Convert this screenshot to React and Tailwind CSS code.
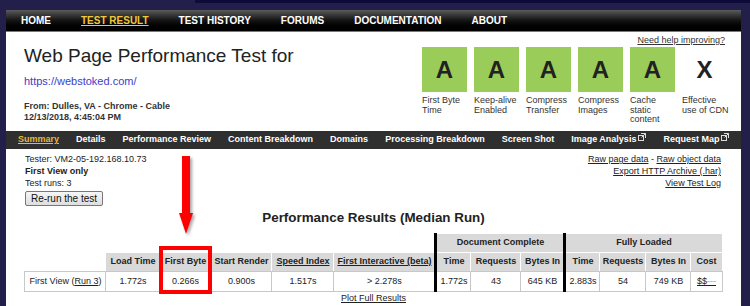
import React from 'react'

const navItems = ['HOME', 'TEST RESULT', 'TEST HISTORY', 'FORUMS', 'DOCUMENTATION', 'ABOUT']

const subNav = [
  { label: 'Summary', active: true },
  { label: 'Details' },
  { label: 'Performance Review' },
  { label: 'Content Breakdown' },
  { label: 'Domains' },
  { label: 'Processing Breakdown' },
  { label: 'Screen Shot' },
  { label: 'Image Analysis', ext: true },
  { label: 'Request Map', ext: true },
]

const grades = [
  { grade: 'A', lines: ['First Byte', 'Time'] },
  { grade: 'A', lines: ['Keep-alive', 'Enabled'] },
  { grade: 'A', lines: ['Compress', 'Transfer'] },
  { grade: 'A', lines: ['Compress', 'Images'] },
  { grade: 'A', lines: ['Cache', 'static', 'content'] },
  { grade: 'X', lines: ['Effective', 'use of CDN'] },
]

// little "opens in new window" glyph
const ExtIcon = () => (
  <svg width="8" height="8" viewBox="0 0 8 8" className="ml-[2px] inline-block align-[1px]" fill="none" stroke="#ddd" strokeWidth="1">
    <rect x="0.5" y="2.5" width="5" height="5" />
    <path d="M3 0.5h4.5v4.5" />
    <path d="M7.5 0.5L3.5 4.5" />
  </svg>
)

const App = () => {
  return (
    <div className="relative w-[750px] h-[306px] overflow-hidden bg-[#221f4b] font-['Liberation_Sans',Arial,sans-serif]">
      {/* top strip */}
      <div className="h-[10px] flex">
        <div className="w-[195px]" />
        <div className="flex-1 h-[3px] bg-[#0e0b3b]" />
      </div>

      <div className="ml-[6px] mr-[9px] bg-white h-[296px]">
        {/* main nav */}
        <div className="h-[22px] flex items-center gap-[30px] pl-[15px] bg-gradient-to-b from-[#5c5c5c] via-[#141414] to-black border-b border-[#7a7a7a] text-[10px] font-bold">
          {navItems.map((item) => (
            <span
              key={item}
              className={item === 'TEST RESULT' ? 'text-[#f3c73b] underline' : 'text-white'}
            >
              {item}
            </span>
          ))}
        </div>

        {/* header */}
        <div className="h-[99px] flex justify-between">
          <div className="pl-[18px] pt-[13px] text-[#222]">
            <h1 className="text-[19px] leading-[22px]">Web Page Performance Test for</h1>
            <p className="mt-[8px] text-[11px] leading-[13px] text-[#3d3dc8]">https://webstoked.com/</p>
            <div className="mt-[13px] text-[9px] leading-[11px] font-bold text-[#333]">
              <p>From: Dulles, VA - Chrome - Cable</p>
              <p>12/13/2018, 4:45:04 PM</p>
            </div>
          </div>

          <div className="pr-[14px] pt-[3px] flex flex-col items-end">
            <span className="mr-[2px] text-[9px] leading-[11px] text-[#333] underline">Need help improving?</span>
            <div className="mt-[1px] flex gap-[7px]">
              {grades.map((g, i) => (
                <div key={i} className="w-[45px]">
                  <div
                    className={`h-[45px] flex items-center justify-center text-[24px] font-bold text-[#222] ${
                      g.grade === 'A' ? 'bg-[#9acc5a]' : ''
                    }`}
                  >
                    {g.grade}
                  </div>
                  <div className="mt-[4px] text-[9px] leading-[9.5px] text-[#333] whitespace-nowrap">
                    {g.lines.map((l) => (
                      <div key={l}>{l}</div>
                    ))}
                  </div>
                </div>
              ))}
            </div>
          </div>
        </div>

        {/* sub nav */}
        <div className="h-[18px] flex items-center gap-[17px] pl-[12px] bg-[#2f2f2f] text-[9px] font-bold">
          {subNav.map((s) => (
            <span
              key={s.label}
              className={`whitespace-nowrap ${s.active ? 'text-[#e8b83a] underline' : 'text-white'}`}
            >
              {s.label}
              {s.ext && <ExtIcon />}
            </span>
          ))}
        </div>

        {/* summary */}
        <div className="pt-[4px] flex justify-between text-[9px] leading-[12px] text-[#222]">
          <div className="pl-[19px]">
            <p>Tester: VM2-05-192.168.10.73</p>
            <p className="font-bold">First View only</p>
            <p>Test runs: 3</p>
            <button className="mt-[2px] h-[15px] w-[78px] flex items-center justify-center border border-[#777] rounded-[2px] bg-gradient-to-b from-[#f6f6f6] to-[#dedede] text-[10px] text-[#111]">
              Re-run the test
            </button>
          </div>
          <div className="pr-[20px] flex flex-col items-end text-[#222]">
            <p>
              <span className="underline">Raw page data</span> - <span className="underline">Raw object data</span>
            </p>
            <p className="underline">Export HTTP Archive (.har)</p>
            <p className="underline">View Test Log</p>
          </div>
        </div>

        <h2 className="mt-[4px] text-center text-[13.4px] leading-[16px] font-bold text-[#222]">
          Performance Results (Median Run)
        </h2>

        <table className="mx-auto mt-[7px] w-[697px] table-fixed border-collapse text-[9px] text-[#222]">
          <colgroup>
            <col className="w-[81px]" />
            <col className="w-[54px]" />
            <col className="w-[51px]" />
            <col className="w-[61px]" />
            <col className="w-[62px]" />
            <col className="w-[102px]" />
            <col className="w-[35px]" />
            <col className="w-[50px]" />
            <col className="w-[44px]" />
            <col className="w-[35px]" />
            <col className="w-[46px]" />
            <col className="w-[45px]" />
            <col className="w-[31px]" />
          </colgroup>
          <thead>
            <tr className="h-[19px]">
              <th colSpan={6} className="border-0" />
              <th colSpan={3} className="bg-[#d9d9d9] border border-white border-l-[3px] border-l-black font-bold">
                Document Complete
              </th>
              <th colSpan={4} className="bg-[#d9d9d9] border border-white border-l-[3px] border-l-black font-bold">
                Fully Loaded
              </th>
            </tr>
            <tr className="h-[19px]">
              <th className="border-0" />
              <th className="bg-[#d9d9d9] border border-white border-b-[#c8c8c8] font-bold">Load Time</th>
              <th className="bg-[#d9d9d9] border border-white border-b-[#c8c8c8] font-bold">First Byte</th>
              <th className="bg-[#d9d9d9] border border-white border-b-[#c8c8c8] font-bold">Start Render</th>
              <th className="bg-[#d9d9d9] border border-white border-b-[#c8c8c8] font-bold underline">Speed Index</th>
              <th className="bg-[#d9d9d9] border border-white border-b-[#c8c8c8] font-bold whitespace-nowrap">
                <span className="underline">First Interactive (beta)</span>
              </th>
              <th className="bg-[#d9d9d9] border border-white border-b-[#c8c8c8] border-l-[3px] border-l-black font-bold">Time</th>
              <th className="bg-[#d9d9d9] border border-white border-b-[#c8c8c8] font-bold">Requests</th>
              <th className="bg-[#d9d9d9] border border-white border-b-[#c8c8c8] font-bold">Bytes In</th>
              <th className="bg-[#d9d9d9] border border-white border-b-[#c8c8c8] border-l-[3px] border-l-black font-bold">Time</th>
              <th className="bg-[#d9d9d9] border border-white border-b-[#c8c8c8] font-bold">Requests</th>
              <th className="bg-[#d9d9d9] border border-white border-b-[#c8c8c8] font-bold">Bytes In</th>
              <th className="bg-[#d9d9d9] border border-white border-b-[#c8c8c8] font-bold">Cost</th>
            </tr>
          </thead>
          <tbody>
            <tr className="h-[20px] text-center">
              <td className="border border-[#c8c8c8] whitespace-nowrap">
                First View (<span className="underline">Run 3</span>)
              </td>
              <td className="border border-[#c8c8c8]">1.772s</td>
              <td className="border border-[#c8c8c8]">0.266s</td>
              <td className="border border-[#c8c8c8]">0.900s</td>
              <td className="border border-[#c8c8c8]">1.517s</td>
              <td className="border border-[#c8c8c8]">&gt; 2.278s</td>
              <td className="border border-[#c8c8c8] border-l-[3px] border-l-black">1.772s</td>
              <td className="border border-[#c8c8c8]">43</td>
              <td className="border border-[#c8c8c8]">645 KB</td>
              <td className="border border-[#c8c8c8] border-l-[3px] border-l-black">2.883s</td>
              <td className="border border-[#c8c8c8]">54</td>
              <td className="border border-[#c8c8c8]">749 KB</td>
              <td className="border border-[#c8c8c8]">
                <span className="underline">$$<span className="text-[#999]">---</span></span>
              </td>
            </tr>
          </tbody>
        </table>

        <p className="text-center text-[9px] leading-[12px] text-[#222] underline">Plot Full Results</p>
      </div>

      {/* annotation: arrow + box */}
      <svg
        className="absolute left-[176px] top-[153px] drop-shadow-[2px_2px_1.5px_rgba(0,0,0,0.35)]"
        width="20"
        height="84"
        viewBox="0 0 20 84"
      >
        <rect x="6" y="3" width="8" height="58" fill="#ff0000" />
        <polygon points="3,60 17,60 10,81" fill="#ff0000" />
      </svg>
      <div className="absolute left-[159px] top-[246px] w-[53px] h-[48px] border-4 border-[#ff0000]" />
    </div>
  )
}

export default App
